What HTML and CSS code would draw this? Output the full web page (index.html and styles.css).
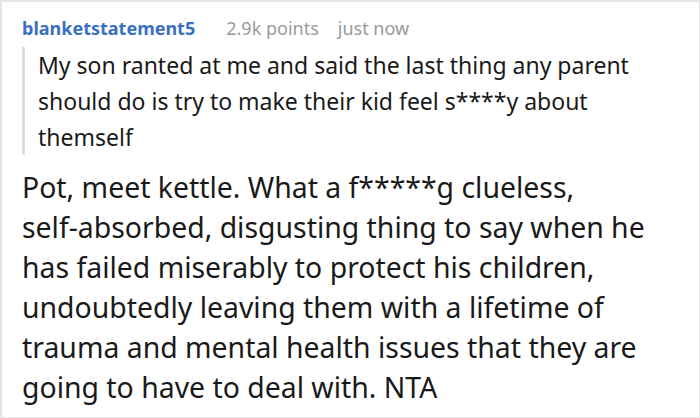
FILE: index.html
```html
<!DOCTYPE html>
<html>
<head>
<meta charset="utf-8">
<link rel="stylesheet" href="styles.css">
</head>
<body>
<div class="comment">
  <div class="meta">
    <span class="author">blanketstatement5</span>
    <span class="points">2.9k points</span>
    <span class="time">just now</span>
  </div>
  <blockquote class="quote">My son ranted at me and said the last thing any parent should do is try to make their kid feel s****y about themself</blockquote>
  <p class="body">Pot, meet kettle. What a f*****g clueless, <span class="nowrap">self-absorbed,</span> disgusting thing to say when he has failed miserably to protect his children, undoubtedly leaving them with a lifetime of trauma and mental health issues that they are going to have to deal with. NTA</p>
</div>
</body>
</html>
```

FILE: styles.css
```css
html, body {
  margin: 0;
  padding: 0;
  background: #fff;
}
.comment {
  box-sizing: border-box;
  width: 700px;
  height: 418px;
  border: 2px solid #e6e6e6;
  border-right-width: 1px;
  border-bottom-width: 1px;
  padding: 14px 20px 0 20px;
  font-family: "Noto Sans", "Open Sans", sans-serif;
  color: #1a1a1a;
  overflow: hidden;
}
.meta {
  display: flex;
  align-items: baseline;
  font-size: 18px;
  line-height: 24px;
}
.author {
  font-weight: 700;
  color: #3b6fc2;
  margin-right: 31px;
}
.points {
  color: #9a9a9a;
  margin-right: 19px;
}
.time {
  color: #9a9a9a;
}
.quote {
  margin: 7px 0 0 0;
  padding: 0 0 0 13px;
  border-left: 3px solid #dddddd;
  font-size: 23px;
  line-height: 36px;
}
.body {
  margin: 12px 0 0 0;
  font-size: 28.4px;
  line-height: 40px;
}
.nowrap {
  white-space: nowrap;
}
```
